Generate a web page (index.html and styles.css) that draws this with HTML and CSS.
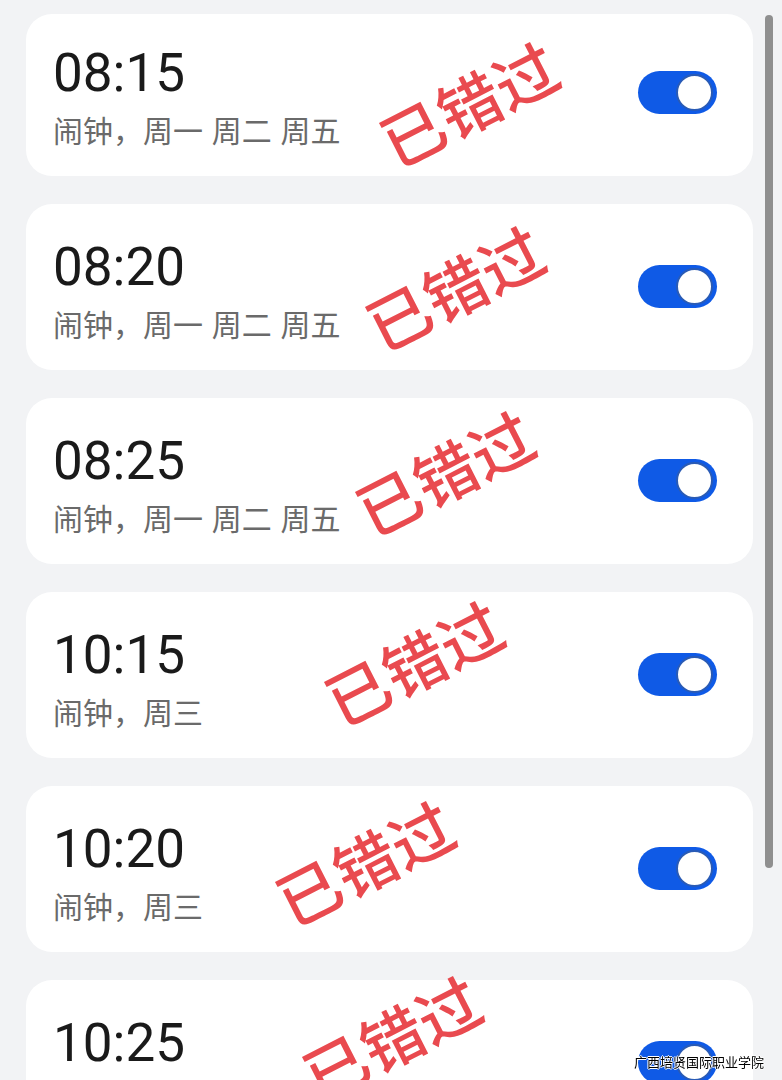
FILE: index.html
```html
<!DOCTYPE html>
<html lang="zh-CN">
<head>
    <meta charset="UTF-8">
    <meta name="viewport" content="width=device-width, initial-scale=1.0">
    <title>闹钟</title>
    <link rel="stylesheet" href="styles.css">
</head>
<body>
    <div class="list">
        <div class="card first">
            <div class="info">
                <div class="time">08:15</div>
                <div class="label">闹钟，周一 周二 周五</div>
            </div>
            <div class="switch"><span class="knob"></span></div>
            <div class="stamp stamp-1">已错过</div>
        </div>
        <div class="card">
            <div class="info">
                <div class="time">08:20</div>
                <div class="label">闹钟，周一 周二 周五</div>
            </div>
            <div class="switch"><span class="knob"></span></div>
            <div class="stamp stamp-2">已错过</div>
        </div>
        <div class="card">
            <div class="info">
                <div class="time">08:25</div>
                <div class="label">闹钟，周一 周二 周五</div>
            </div>
            <div class="switch"><span class="knob"></span></div>
            <div class="stamp stamp-3">已错过</div>
        </div>
        <div class="card">
            <div class="info">
                <div class="time">10:15</div>
                <div class="label">闹钟，周三</div>
            </div>
            <div class="switch"><span class="knob"></span></div>
            <div class="stamp stamp-4">已错过</div>
        </div>
        <div class="card">
            <div class="info">
                <div class="time">10:20</div>
                <div class="label">闹钟，周三</div>
            </div>
            <div class="switch"><span class="knob"></span></div>
            <div class="stamp stamp-5">已错过</div>
        </div>
        <div class="card">
            <div class="info">
                <div class="time">10:25</div>
                <div class="label">闹钟，周三</div>
            </div>
            <div class="switch"><span class="knob"></span></div>
            <div class="stamp stamp-6">已错过</div>
        </div>
    </div>

    <div class="scrollbar"></div>
    <div class="watermark">广西培贤国际职业学院</div>
</body>
</html>
```

FILE: styles.css
```css
html, body {
    height: 100%;
    overflow: hidden;
}
body {
    margin: 0;
    padding: 14px 29px 0 26px;
    background-color: #f2f3f5;
    font-family: "Noto Sans CJK SC", "Noto Sans", sans-serif;
}
.list {
    display: flex;
    flex-direction: column;
    gap: 28px;
}
.card {
    position: relative;
    display: flex;
    align-items: center;
    justify-content: space-between;
    padding: 33px 36px 27px 27px;
    background-color: #fff;
    border-radius: 26px;
}
.card.first {
    padding-top: 29px;
}
.time {
    font-family: Roboto, "Noto Sans", sans-serif;
    font-size: 53px;
    line-height: 60px;
    color: #1a1a1a;
}
.label {
    margin-top: 6px;
    font-size: 30px;
    line-height: 40px;
    word-spacing: 2px;
    color: #6a6a6a;
}
.switch {
    position: relative;
    width: 79px;
    height: 43px;
    margin-top: -7px;
    border-radius: 22px;
    background-color: #0f5ae6;
}
.knob {
    position: absolute;
    top: 3px;
    right: 4px;
    width: 33px;
    height: 33px;
    border: 2px solid #2a5bb5;
    border-radius: 50%;
    background-color: #fff;
}
.stamp {
    position: absolute;
    font-size: 63px;
    font-weight: 500;
    line-height: 1;
    color: #e94a4f;
    white-space: nowrap;
    transform: translate(-50%, -50%) rotate(-27deg);
    pointer-events: none;
}
.stamp-1 { left: 442px; top: 88px; }
.stamp-2 { left: 428px; top: 82px; }
.stamp-3 { left: 418px; top: 73px; }
.stamp-4 { left: 387px; top: 69px; }
.stamp-5 { left: 338px; top: 75px; }
.stamp-6 { left: 365px; top: 56px; }
.scrollbar {
    position: fixed;
    top: 15px;
    left: 765px;
    width: 8px;
    height: 853px;
    border-radius: 4px;
    background-color: #8f8f8f;
}
.watermark {
    position: fixed;
    right: 18px;
    bottom: 10px;
    font-size: 13px;
    line-height: 16px;
    color: #000;
    text-shadow: 1px 0 0 #fff, -1px 0 0 #fff, 0 1px 0 #fff, 0 -1px 0 #fff;
}
```
